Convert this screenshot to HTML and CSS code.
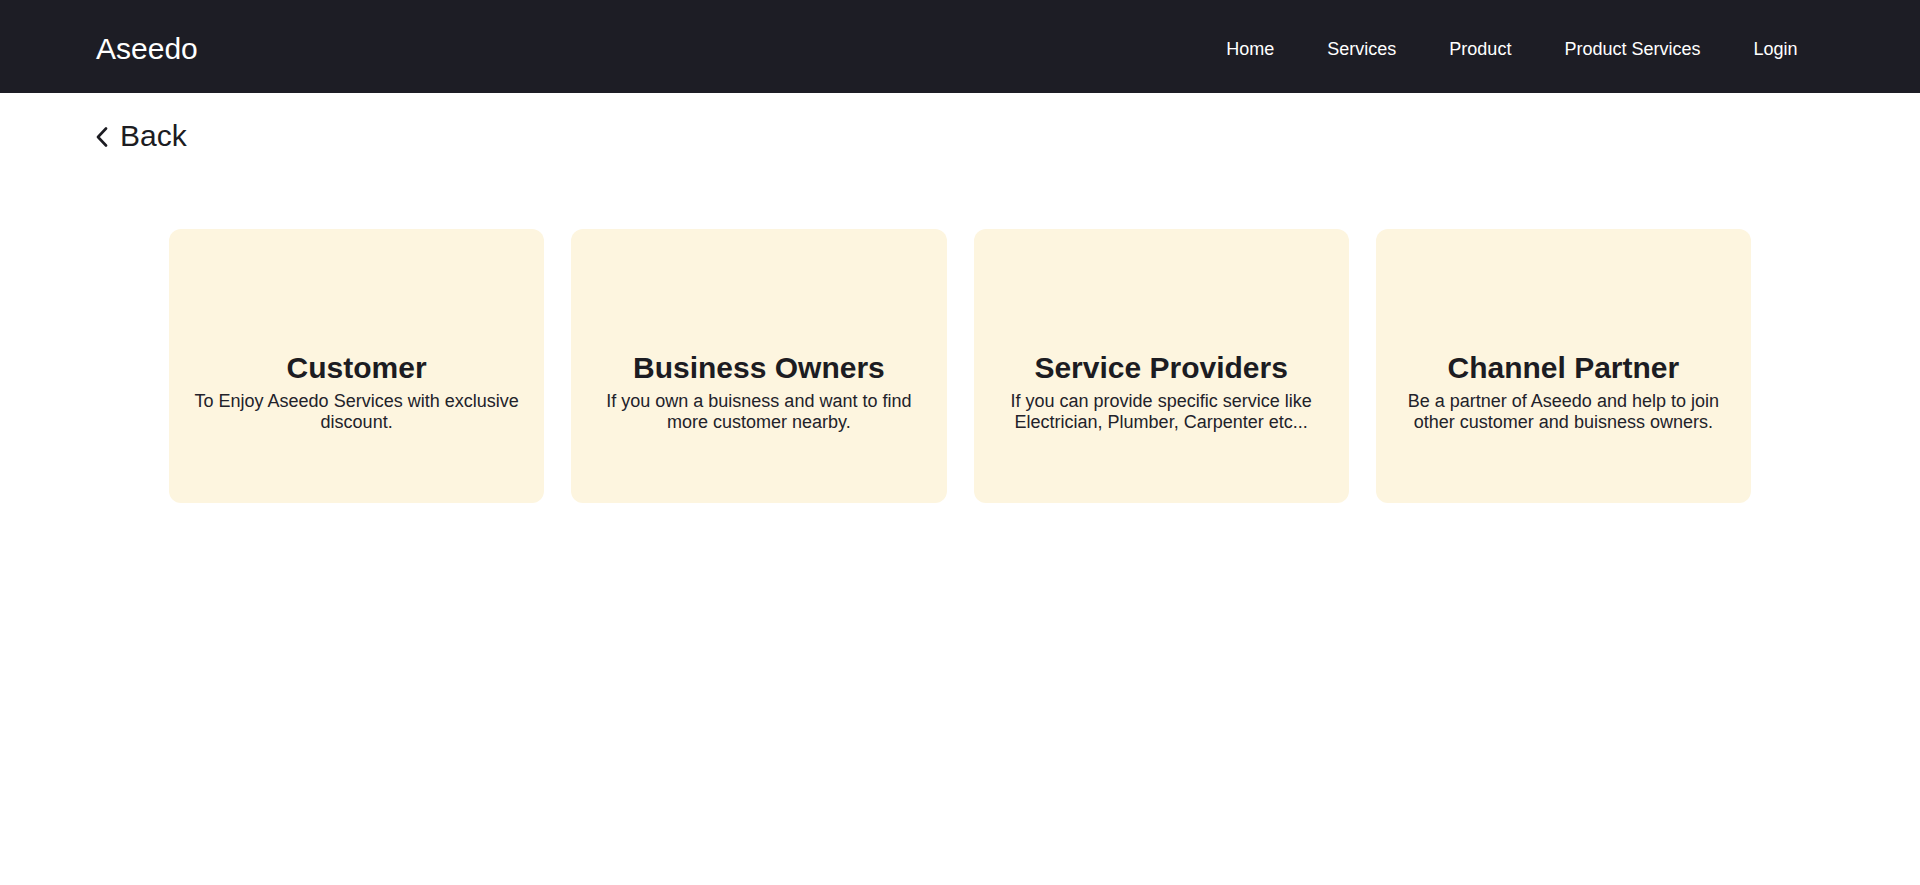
FILE: index.html
```html
<!DOCTYPE html>
<html lang="en">
<head>
<meta charset="utf-8">
<title>Aseedo</title>
<link rel="stylesheet" href="styles.css">
</head>
<body>
<header class="topbar">
  <a class="logo" href="#">Aseedo</a>
  <nav class="nav">
    <a href="#">Home</a>
    <a href="#">Services</a>
    <a href="#">Product</a>
    <a href="#">Product Services</a>
    <a href="#">Login</a>
  </nav>
</header>
<main class="page">
  <a class="back" href="#">
    <svg class="back-icon" width="12" height="20" viewBox="0 0 12 20" aria-hidden="true"><path d="M10 1.5 L2 10 L10 18.5" fill="none" stroke="currentColor" stroke-width="2.6" stroke-linecap="round" stroke-linejoin="round"/></svg>
    <span>Back</span>
  </a>
  <section class="cards">
    <div class="card">
      <h2>Customer</h2>
      <p>To Enjoy Aseedo Services with exclusive discount.</p>
    </div>
    <div class="card">
      <h2>Business Owners</h2>
      <p>If you own a buisness and want to find more customer nearby.</p>
    </div>
    <div class="card">
      <h2>Service Providers</h2>
      <p>If you can provide specific service like Electrician, Plumber, Carpenter etc...</p>
    </div>
    <div class="card">
      <h2>Channel Partner</h2>
      <p>Be a partner of Aseedo and help to join other customer and buisness owners.</p>
    </div>
  </section>
</main>
</body>
</html>
```

FILE: styles.css
```css
* { box-sizing: border-box; }
html, body { margin: 0; padding: 0; }
body {
  font-family: "Liberation Sans", Arial, sans-serif;
  background: #ffffff;
  color: #1c1c22;
}
a { text-decoration: none; color: inherit; }

.topbar {
  height: 93px;
  background: #1d1d25;
  display: flex;
  align-items: center;
  justify-content: space-between;
  padding: 0 96px;
}
.logo {
  color: #ffffff;
  font-size: 30px;
  padding-top: 5px;
}
.nav {
  display: flex;
  padding-top: 6px;
}
.nav a {
  color: #ffffff;
  font-size: 18px;
  padding: 0 26.5px;
}

.page {
  padding: 26px 96px 0;
}
.back {
  display: inline-flex;
  align-items: center;
  gap: 12px;
  font-size: 30px;
  color: #1c1c22;
}
.back-icon { margin-top: 1px; }

.cards {
  width: 1582px;
  margin: 76px 0 0 73px;
  display: grid;
  grid-template-columns: repeat(4, 1fr);
  gap: 27px;
}
.card {
  height: 274px;
  background: #fdf5df;
  border-radius: 12px;
  padding: 52px 16px 0;
  display: flex;
  flex-direction: column;
  justify-content: center;
  text-align: center;
}
.card h2 {
  margin: 0 0 6px;
  font-size: 30px;
  font-weight: 700;
  color: #1c1c22;
}
.card p {
  margin: 0;
  font-size: 18px;
  color: #22222a;
}
```
